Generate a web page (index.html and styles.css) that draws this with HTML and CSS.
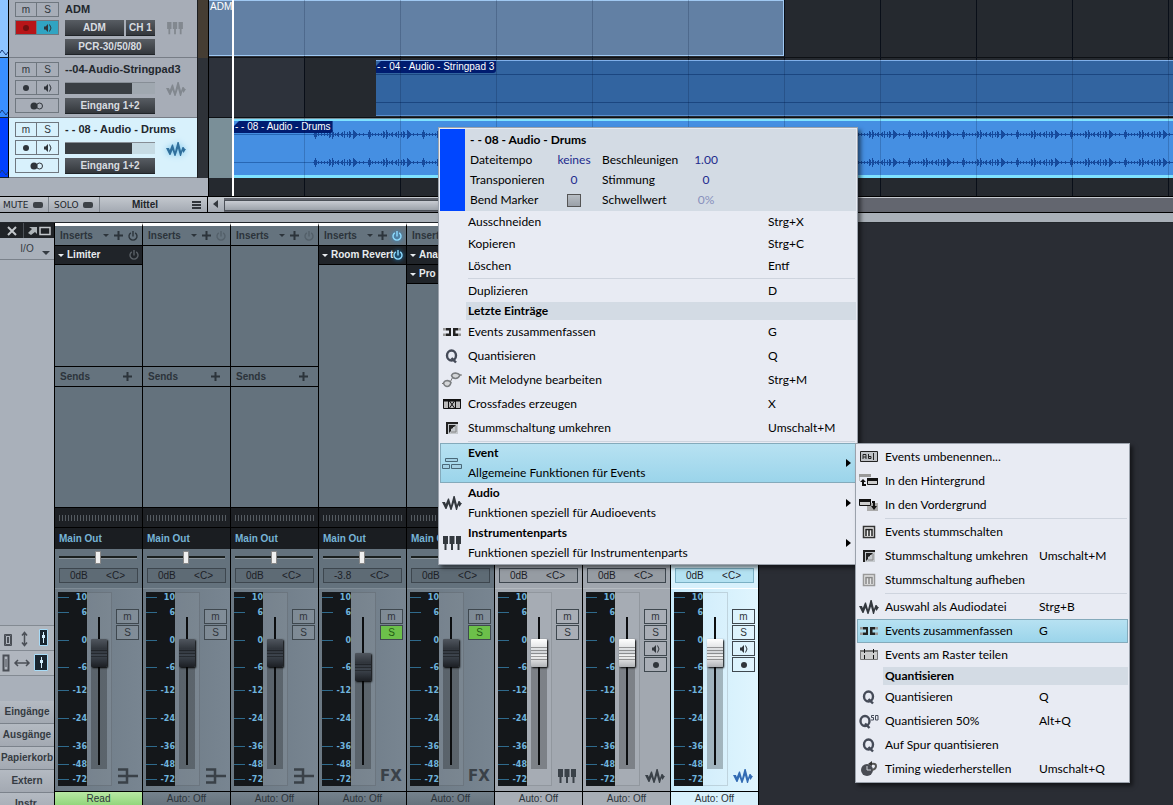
FILE: index.html
```html
<!DOCTYPE html>
<html lang="de">
<head>
    <meta charset="UTF-8">
    <meta name="viewport" content="width=device-width, initial-scale=1.0">
    <title>Song</title>
    <link rel="stylesheet" href="styles.css">
</head>
<body>
    <!-- icon set -->
    <svg class="defs" aria-hidden="true">
        <symbol id="i-rec" viewBox="0 0 12 12"><circle cx="6" cy="6" r="3" fill="currentColor"/></symbol>
        <symbol id="i-mon" viewBox="0 0 12 12"><path d="M2 4.500h1.500L6 2v8L3.500 7.500H2z" fill="currentColor"/><path d="M7.500 2.500q3 3.500 0 7" fill="none" stroke="currentColor"/></symbol>
        <symbol id="i-stereo" viewBox="0 0 14 10"><circle cx="4" cy="5" r="3.500" fill="currentColor"/><circle cx="9.500" cy="5" r="3" fill="none" stroke="currentColor"/></symbol>
        <symbol id="i-keys" viewBox="0 0 20 16"><path d="M1 1h5v8H4.500v6h-2V9H1zM7.500 1h5v8H11v6H9V9H7.500zM14 1h5v8h-1.500v6h-2V9H14z" fill="currentColor"/></symbol>
        <symbol id="i-wave" viewBox="0 0 20 16"><path d="M0 7h3l.8 2L6 3.500h1l2 7L11.500 1h1.200l2.300 9 1.500-4h1L19 8h1l-2.500 4-1-2-1.500 5h-1L12 7.500 9.500 15h-1L6.500 9 4.500 14h-1z" fill="currentColor"/></symbol>
        <symbol id="i-mini" viewBox="0 0 8 8"><path d="M0 4l2-3 4 5 2-3" fill="none" stroke="currentColor"/></symbol>
        <symbol id="i-bus" viewBox="0 0 22 16"><path d="M2 1.500h9v13H2M2 8h20" fill="none" stroke="currentColor" stroke-width="2.500"/></symbol>
        <symbol id="i-power" viewBox="0 0 10 10"><path d="M2.800 1.800a4 4 0 1 0 4.400 0M5 0v5.500" fill="none" stroke="currentColor" stroke-width="1.400"/></symbol>
        <symbol id="i-plus" viewBox="0 0 9 9"><path d="M3.500 0h2v3.500H9v2H5.500V9h-2V5.500H0v-2h3.500z" fill="currentColor"/></symbol>
        <symbol id="i-down" viewBox="0 0 8 4"><path d="M0 0h8L4 4z" fill="currentColor"/></symbol>
        <symbol id="i-right" viewBox="0 0 5 8"><path d="M0 0l5 4-5 4z" fill="currentColor"/></symbol>
        <symbol id="i-glue" viewBox="0 0 20 16"><path d="M4 4h5v8H4V9.500h3V6.500H4zM11 4h5v2.500h-2.500v3H16V12h-5z" fill="#222"/><path d="M1 4h3v2.500H1zM1 9.500h3V12H1zM16 4h3v2.500h-3zM16 9.500h3V12h-3z" fill="#999"/></symbol>
        <symbol id="i-q" viewBox="0 0 20 16"><ellipse cx="9.500" cy="7.500" rx="4.500" ry="5" fill="none" stroke="#454b58" stroke-width="2.400"/><path d="M9.500 10l4.500 4.500" stroke="#454b58" stroke-width="2.400"/></symbol>
        <symbol id="i-q50" viewBox="0 0 20 16"><ellipse cx="6" cy="8" rx="4.500" ry="5" fill="none" stroke="#454b58" stroke-width="2.400"/><path d="M6 10.500l4.500 4.500" stroke="#454b58" stroke-width="2.400"/><path d="M15 2.500h-2.500v2h2v2.500h-2.500M16.500 2.500h2.500v4.500h-2.500z" fill="none" stroke="#454b58"/></symbol>
        <symbol id="i-melodyne" viewBox="0 0 20 16"><path d="M9.500 3.500q1-2.500 4-2.500 3 .5 4.500 2-1.500 3.500-4.500 3.500t-4-3zM1.500 11q1-2.500 4-2.500 2.500.5 3.500 2-1 4-4 4-3-.5-3.500-3.500z" fill="#d4d6d8" stroke="#7a7d80" stroke-width="1.500"/><path d="M8.500 9.500l2-4M18 3h2M0 11.500h2" fill="none" stroke="#777"/></symbol>
        <symbol id="i-xfade" viewBox="0 0 20 16"><path d="M1.500 3.500h17v9h-17z" fill="#bbb" stroke="#111"/><path d="M1 3h18v2.500H1z" fill="#111"/><path d="M6.500 5v8M13.500 5v8M7.500 12l5-7M7.500 5l5 7" stroke="#111" fill="none"/></symbol>
        <symbol id="i-mute" viewBox="0 0 20 16"><path d="M4.500 2.500h11v11h-11z" fill="#eee" stroke="#333" stroke-width="1.500"/><path d="M7 12V5.500h6V12M10 5.500V12" fill="none" stroke="#222" stroke-width="1.500"/></symbol>
        <symbol id="i-unmute" viewBox="0 0 20 16"><path d="M4.500 2.500h11v11h-11z" fill="#e4e4e4" stroke="#999" stroke-width="1.500"/><path d="M7 12V5.500h6V12M10 5.500V12" fill="none" stroke="#888" stroke-width="1.500"/></symbol>
        <symbol id="i-mutetoggle" viewBox="0 0 20 16"><path d="M4 2h12v12H4z" fill="#c4c8cc"/><path d="M4 2h12v2H6v10H4z" fill="#222"/><path d="M7 5h7l-2 2h-1v1l-2 1v2l-2 2z" fill="#222"/><path d="M14 6v6H9" fill="none" stroke="#888"/></symbol>
        <symbol id="i-event" viewBox="0 0 20 16"><path d="M3.500 3.500h12v3h-12zM.5 9.500h7v4h-7zM9.500 9.500h10v4h-10z" fill="#a3d0e4" stroke="#4a6878"/></symbol>
        <symbol id="i-rename" viewBox="0 0 20 16"><path d="M1.500 2.500h17v10h-17z" fill="#bfc2c6" stroke="#222"/><path d="M4 10V5.500h3V10M4 8h3M9.500 5v4.500h2.500v-2H9.500M14.500 4v7" fill="none" stroke="#222"/></symbol>
        <symbol id="i-back" viewBox="0 0 20 16"><path d="M0 1h12v3H0z" fill="#999"/><path d="M.5 4v4" stroke="#bbb"/><path d="M8.500 5.500h10v6h-10z" fill="#ccc" stroke="#111"/><path d="M8 5h11v3H8z" fill="#111"/><path d="M4 6l3 3H5v2h2v2H3V9H1z" fill="#111"/></symbol>
        <symbol id="i-front" viewBox="0 0 20 16"><path d="M8 6h11v8H8z" fill="#aaa"/><path d="M.5 2.500h11v6H.5z" fill="#ccc" stroke="#111"/><path d="M0 2h12v3H0z" fill="#111"/><path d="M13 4h3v5h2l-3 4-3-4h2V6h-1z" fill="#111"/></symbol>
        <symbol id="i-split" viewBox="0 0 20 16"><path d="M1.500 3.500h17v9h-17z" fill="#ccc" stroke="#777"/><path d="M1 3h18v2H1z" fill="#777"/><path d="M5.500 2v12M14.500 2v12" stroke="#111" stroke-dasharray="4 2"/></symbol>
        <symbol id="i-timing" viewBox="0 0 20 16"><circle cx="8" cy="9" r="6" fill="#494c54"/><path d="M8 5v4h4" fill="none" stroke="#cdd0d6"/><path d="M12 3q5-1 5 2t-4 4" fill="none" stroke="#555" stroke-width="2"/><path d="M9 3l4-3v5z" fill="#333"/></symbol>
        <pattern id="hits" width="54" height="28" patternUnits="userSpaceOnUse">
            <path d="M0 13.500h54M1.500 11v5M2.500 9v9M3.500 11v5M5.500 12v3M8.500 12v3M11.500 12v3M14.500 12v3M16.500 10v7M17.500 11v5M19.500 9v9M20.500 11v5M22.500 12v3M24.500 12v3M25.500 11v5M28.500 12v3M29.500 11v5M31.500 10v7M34.500 11v5M36.500 10v7M37.500 11v5M40.500 9v9M41.500 10v7M42.500 11v5M43.500 12v3M46.500 12v3M50.500 12v3" stroke="#164a9c" fill="none"/>
        </pattern>
    </svg>

    <main class="app">
        <section class="arrange">
            <div class="tracks">
                <div class="track first">
                    <div class="color c1"><svg><use href="#i-mini"/></svg></div>
                    <div class="track-body">
                        <div class="toggles">
                            <button>m</button><button>S</button>
                            <button class="rec-on" aria-label="Aufnahme"><svg><use href="#i-rec"/></svg></button><button class="mon-on" aria-label="Monitor"><svg><use href="#i-mon"/></svg></button>
                        </div>
                        <div class="track-info">
                            <span class="track-name">ADM</span>
                            <div class="slots"><button class="slot grow">ADM</button><button class="slot">CH 1</button></div>
                            <button class="slot">PCR-30/50/80</button>
                        </div>
                        <svg class="type"><use href="#i-keys"/></svg>
                    </div>
                    <div class="edge warm"></div>
                </div>
                <div class="track">
                    <div class="color c2"><svg><use href="#i-mini"/></svg></div>
                    <div class="track-body">
                        <div class="toggles">
                            <button>m</button><button>S</button>
                            <button aria-label="Aufnahme"><svg><use href="#i-rec"/></svg></button><button aria-label="Monitor"><svg><use href="#i-mon"/></svg></button>
                            <button class="wide" aria-label="Stereo"><svg><use href="#i-stereo"/></svg></button>
                        </div>
                        <div class="track-info">
                            <span class="track-name">--04-Audio-Stringpad3</span>
                            <div class="level"></div>
                            <button class="slot">Eingang 1+2</button>
                        </div>
                        <svg class="type"><use href="#i-wave"/></svg>
                    </div>
                    <div class="edge"></div>
                </div>
                <div class="track selected">
                    <div class="color c3"><svg><use href="#i-mini"/></svg></div>
                    <div class="track-body">
                        <div class="toggles">
                            <button>m</button><button>S</button>
                            <button aria-label="Aufnahme"><svg><use href="#i-rec"/></svg></button><button aria-label="Monitor"><svg><use href="#i-mon"/></svg></button>
                            <button class="wide" aria-label="Stereo"><svg><use href="#i-stereo"/></svg></button>
                        </div>
                        <div class="track-info">
                            <span class="track-name">- - 08 - Audio - Drums</span>
                            <div class="level"></div>
                            <button class="slot">Eingang 1+2</button>
                        </div>
                        <svg class="type"><use href="#i-wave"/></svg>
                    </div>
                    <div class="edge"></div>
                </div>
            </div>
            <div class="timeline">
                <div class="lane first"><div class="event adm"><span>ADM</span></div></div>
                <div class="lane"><div class="event string"><span class="tag">- - 04 - Audio - Stringpad 3</span></div></div>
                <div class="lane active">
                    <div class="event drums"><span class="tag">- - 08 - Audio - Drums</span>
                        <svg class="hits"><rect width="100%" height="100%" fill="url(#hits)"/></svg>
                    </div>
                </div>
                <div class="playhead"></div>
            </div>
        </section>

        <div class="bar">
            <button class="led">MUTE<i></i></button>
            <button class="led">SOLO<i></i></button>
            <button class="size">Mittel<i></i></button>
            <button class="scroll-left" aria-label="Links"><svg><use href="#i-right"/></svg></button>
            <div class="scroll"><div class="thumb"></div></div>
        </div>
        <div class="band"></div>

        <section class="mixer">
            <div class="side">
                <div class="side-head">
                    <button aria-label="Schließen"><svg viewBox="0 0 10 10" width="10" height="10"><path d="M1 1l8 8M9 1l-8 8" stroke="#c4c8cc" stroke-width="2"/></svg></button>
                    <button aria-label="Fenster"><svg viewBox="0 0 24 10" width="24" height="10"><path d="M2 1h8v7L8 6 4 9 1 7l4-4z" fill="#aeb4b8"/><path d="M13 1.500h10v7H13z" fill="none" stroke="#c4c8cc" stroke-width="1.500"/></svg></button>
                </div>
                <button class="io">I/O<svg><use href="#i-down"/></svg></button>
                <div class="space"></div>
                <div class="zoom"><svg viewBox="0 0 54 24"><path d="M5.500 9.500h5v9h-5zM4.500 8.500h7v11h-7z" fill="none" stroke="#4a4f56"/><path d="M8 11v6" stroke="#4a4f56" stroke-width="2"/><path d="M24.500 8v10M22 9.500l2.500-3 2.500 3M22 16.500l2.500 3 2.500-3" fill="none" stroke="#4a4f56" stroke-width="1.500"/><path d="M39.500 3.500h8v16h-8z" fill="#1a2630" stroke="#a8dcf8"/><path d="M43.500 6v11M43.500 9v4" stroke="#d4f0ff"/><path d="M42 9h3v3h-3z" fill="#d4f0ff"/></svg></div>
                <div class="zoom"><svg viewBox="0 0 54 24"><path d="M3.500 4.500h5v15h-5z" fill="none" stroke="#4a4f56" stroke-width="2"/><path d="M6 8v8" stroke="#4a4f56"/><path d="M16 12h12M18 9l-3 3 3 3M26 9l3 3-3 3" fill="none" stroke="#4a4f56" stroke-width="1.500"/><path d="M34.500 3.500h13v16h-13z" fill="#1a2630" stroke="#a8dcf8"/><path d="M41.500 6v11" stroke="#d4f0ff"/><path d="M40 9h3v3h-3z" fill="#d4f0ff"/></svg></div>
                <div class="side-gap"></div>
                <button class="side-btn">Eingänge</button>
                <button class="side-btn">Ausgänge</button>
                <button class="side-btn">Papierkorb</button>
                <button class="side-btn">Extern</button>
                <button class="side-btn">Instr.</button>
            </div>
            <div class="strips" id="strips"></div>
        </section>
    </main>

    <div class="menu main-menu" role="menu">
        <div class="event-head">
            <div class="event-color"></div>
            <div class="event-props">
                <strong>- - 08 - Audio - Drums</strong>
                <span>Dateitempo</span><a href="#">keines</a><span>Beschleunigen</span><a href="#">1.00</a>
                <span>Transponieren</span><a href="#">0</a><span>Stimmung</span><a href="#">0</a>
                <label for="bend">Bend Marker</label><input type="checkbox" id="bend"><span>Schwellwert</span><a href="#" class="off">0%</a>
            </div>
        </div>
        <button class="item low"><i></i><span>Ausschneiden</span><kbd>Strg+X</kbd></button>
        <button class="item low"><i></i><span>Kopieren</span><kbd>Strg+C</kbd></button>
        <button class="item low"><i></i><span>Löschen</span><kbd>Entf</kbd></button>
        <hr>
        <button class="item low"><i></i><span>Duplizieren</span><kbd>D</kbd></button>
        <h2>Letzte Einträge</h2>
        <button class="item"><svg><use href="#i-glue"/></svg><span>Events zusammenfassen</span><kbd>G</kbd></button>
        <button class="item"><svg><use href="#i-q"/></svg><span>Quantisieren</span><kbd>Q</kbd></button>
        <button class="item"><svg><use href="#i-melodyne"/></svg><span>Mit Melodyne bearbeiten</span><kbd>Strg+M</kbd></button>
        <button class="item"><svg><use href="#i-xfade"/></svg><span>Crossfades erzeugen</span><kbd>X</kbd></button>
        <button class="item"><svg><use href="#i-mutetoggle"/></svg><span>Stummschaltung umkehren</span><kbd>Umschalt+M</kbd></button>
        <hr>
        <button class="item tall hot"><svg><use href="#i-event"/></svg><span><b>Event</b>Allgemeine Funktionen für Events</span><svg class="more"><use href="#i-right"/></svg></button>
        <button class="item tall"><svg><use href="#i-wave"/></svg><span><b>Audio</b>Funktionen speziell für Audioevents</span><svg class="more"><use href="#i-right"/></svg></button>
        <button class="item tall"><svg><use href="#i-keys"/></svg><span><b>Instrumentenparts</b>Funktionen speziell für Instrumentenparts</span><svg class="more"><use href="#i-right"/></svg></button>
    </div>

    <div class="menu sub-menu" role="menu">
        <button class="item"><svg><use href="#i-rename"/></svg><span>Events umbenennen...</span></button>
        <button class="item"><svg><use href="#i-back"/></svg><span>In den Hintergrund</span></button>
        <button class="item"><svg><use href="#i-front"/></svg><span>In den Vordergrund</span></button>
        <hr>
        <button class="item"><svg><use href="#i-mute"/></svg><span>Events stummschalten</span></button>
        <button class="item"><svg><use href="#i-mutetoggle"/></svg><span>Stummschaltung umkehren</span><kbd>Umschalt+M</kbd></button>
        <button class="item"><svg><use href="#i-unmute"/></svg><span>Stummschaltung aufheben</span></button>
        <hr>
        <button class="item"><svg><use href="#i-wave"/></svg><span>Auswahl als Audiodatei</span><kbd>Strg+B</kbd></button>
        <button class="item hot"><svg><use href="#i-glue"/></svg><span>Events zusammenfassen</span><kbd>G</kbd></button>
        <button class="item"><svg><use href="#i-split"/></svg><span>Events am Raster teilen</span></button>
        <h2>Quantisieren</h2>
        <button class="item"><svg><use href="#i-q"/></svg><span>Quantisieren</span><kbd>Q</kbd></button>
        <button class="item"><svg><use href="#i-q50"/></svg><span>Quantisieren 50%</span><kbd>Alt+Q</kbd></button>
        <button class="item"><svg><use href="#i-q"/></svg><span>Auf Spur quantisieren</span></button>
        <button class="item"><svg><use href="#i-timing"/></svg><span>Timing wiederherstellen</span><kbd>Umschalt+Q</kbd></button>
    </div>

    <script src="script.js"></script>
</body>
</html>
```
FILE: styles.css
```css
* { box-sizing: border-box; }
body { margin: 0; height: 100vh; overflow: hidden; position: relative; background: #2a2d34; color: #22262b; font: bold 10px/12px "Liberation Sans", Arial, sans-serif; }
button { margin: 0; padding: 0; border: 0; background: none; color: inherit; font: inherit; }
svg { display: block; flex: none; }
.defs { position: absolute; width: 0; height: 0; }
.app { display: flex; flex-direction: column; height: 100%; }

/* arrangement */
.arrange { display: flex; height: 196px; flex: none; background: #a9b0ba; }
.tracks { width: 209px; flex: none; border-right: 1px solid #000; }
.track { display: flex; height: 60px; }
.track.first { height: 58px; }
.color { width: 9px; border-right: 1px solid #000; border-bottom: 1px solid #123; display: flex; align-items: flex-end; color: #1b3c78; }
.color svg { width: 8px; height: 8px; }
.c1 { background: #8ec4ff; }
.c2 { background: #3a90ff; }
.c3 { background: #0040ff; }
.track-body { flex: 1; display: flex; gap: 6px; padding: 4px 0 0 6px; background: #a7adb7; border-bottom: 1px solid #777d86; color: #30353b; }
.first .track-body { padding-top: 2px; }
.selected .track-body { background: #d8f1fc; }
.toggles { display: grid; grid-template-columns: 22px 22px; grid-auto-rows: 15px; row-gap: 3px; align-content: start; }
.toggles button, .ms button { display: flex; align-items: center; justify-content: center; border: 1px solid #6f777f; font-size: 10px; font-weight: normal; color: #30353b; }
.toggles button:nth-child(even) { border-left: 0; }
.toggles svg, .ms svg { width: 12px; height: 12px; }
.toggles .wide { grid-column: span 2; }
.toggles .wide svg { width: 14px; height: 10px; }
.toggles .rec-on { background: #b81518; color: #701010; }
.toggles .mon-on { background: #31a4c2; }
.track-info { width: 90px; display: flex; flex-direction: column; gap: 3px; }
.track-name { height: 15px; line-height: 15px; font-size: 11px; white-space: nowrap; color: #22272d; }
.slots { display: flex; gap: 2px; }
.slot { height: 16px; width: 100%; flex: none; background: linear-gradient(#585d63, #33373c); border-bottom: 1px solid #1f2327; color: #d8dce0; line-height: 15px; }
.slots .slot { width: 29px; }
.slots .grow { flex: 1; }
.level { height: 12px; margin: 2px 0 1px; border-top: 1px solid #878e96; background: linear-gradient(90deg, #393e43 0 67px, #a0a8b0 67px); }
.selected .level { background: linear-gradient(90deg, #393e43 0 67px, #c6dbe4 67px); }
.type { width: 20px; height: 16px; margin: 19px 0 0 5px; color: #82888f; }
.selected .type { color: #2f6f9c; filter: drop-shadow(0 0 3px #6fc0ea); }
.first .type { width: 18px; height: 14px; }
.edge { width: 11px; background: #2e3238; border-left: 1px solid #1b1d20; }
.warm { background: #453d33; }

.timeline { flex: 1; position: relative; min-width: 0; overflow: hidden; background: #25292f; }
.timeline::after { content: ""; position: absolute; inset: 0; background: repeating-linear-gradient(90deg, transparent 0 95px, rgba(0, 16, 48, .2) 95px 96px); }
.lane { height: 60px; padding: 2px 0; border-bottom: 1px solid #0d1014; background: linear-gradient(90deg, #2d323b 0 95px, transparent 95px); }
.lane:not(.active), .timeline { background-image: repeating-linear-gradient(90deg, transparent 0 95px, #0b0e12 95px 96px); }
.lane:not(.active) { background-image: linear-gradient(90deg, #2d323b 0 95px, transparent 95px); }
.lane.first { height: 58px; padding: 0; }
.lane.active { padding: 1px 0 0; border: 0; background: #7a8f98; }
.event { position: relative; height: 56px; }
.adm { width: 575px; background: #6280a4; border: solid #9fc8f2; border-width: 1px 1px 1px 0; color: #fff; font: 10px/12px "Liberation Sans", Arial, sans-serif; padding-left: 1px; }
.string { margin-left: 167px; border-top: 1px solid #80b0ea; border-bottom: 1px solid #5c90d0; background: linear-gradient(transparent 13px, #1b4680 13px 14px, transparent 14px 41px, #1b4680 41px 42px, transparent 42px) #3264a0; }
.tag { position: absolute; left: 0; top: 0; padding: 0 2px 0 1px; background: #001c70; border-bottom-right-radius: 3px; color: #fff; font: 10px/12px "Liberation Sans", Arial, sans-serif; white-space: nowrap; clip-path: polygon(5px 0, 100% 0, 100% 100%, 0 100%, 0 5px); }
.drums { height: 59px; margin-left: 25px; border-top: 2px solid #7fe2ff; border-bottom: 3px solid #7fe2ff; background: linear-gradient(transparent 13px, #2767b5 13px 14px, transparent 14px 41px, #2767b5 41px 42px, transparent 42px) #458fe2; padding-left: 79px; }
.hits { width: 100%; height: 54px; }
.playhead { position: absolute; left: 23px; top: 0; width: 2px; height: 100%; background: #fff; z-index: 1; }

/* status bar and scrollbar */
.bar { display: flex; height: 17px; flex: none; border-top: 1px solid #000; border-bottom: 1px solid #000; background: linear-gradient(#c3c8ce, #a3a9b2); }
.led { display: flex; align-items: center; gap: 4px; width: 49px; padding-left: 3px; border-right: 1px solid #7d848c; font: 9px/12px "DejaVu Sans", sans-serif; }
.led + .led { width: 51px; padding-left: 5px; }
.led i { width: 10px; height: 6px; border-radius: 2px; background: #3d4247; }
.size { flex: none; width: 108px; display: flex; align-items: center; justify-content: flex-end; gap: 34px; padding-right: 6px; border-right: 1px solid #000; }
.size i { width: 9px; height: 8px; background: repeating-linear-gradient(#30353b 0 2px, transparent 2px 3px); }
.scroll-left { width: 16px; display: flex; align-items: center; justify-content: center; color: #33383e; transform: rotate(180deg); }
.scroll-left svg { width: 5px; height: 8px; }
.scroll { flex: 1; padding: 2px 0; border-top: 1px solid #c6cad0; background: #63666f; }
.thumb { width: 45%; height: 11px; border: 1px solid #4c5158; background: linear-gradient(#c8ccd2, #9ca2aa); }
.band { height: 10px; flex: none; background: #a9b0b8; border-bottom: 1px solid #23272c; }

/* mixer */
.mixer { flex: 1; min-height: 0; display: flex; overflow: hidden; }
.side { width: 55px; flex: none; display: flex; flex-direction: column; margin-bottom: -11px; background: #a9b0ba; border-right: 1px solid #000; color: #353b42; }
.side-head { display: flex; height: 15px; gap: 1px; background: #4c5157; }
.side-head button { flex: 1; display: flex; align-items: center; justify-content: center; background: #202327; }
.side-head button + button { flex: none; width: 30px; }
.io { position: relative; height: 22px; border-bottom: 1px solid #7b828b; font-weight: normal; }
.io svg { position: absolute; right: 4px; bottom: 4px; width: 8px; height: 4px; }
.space { flex: 1; }
.zoom { height: 25px; border-top: 1px solid #838a92; background: #b0b6be; }
.zoom svg { width: 54px; height: 24px; }
.side-gap { height: 26px; border-top: 1px solid #838a92; }
.side-btn { height: 23px; flex: none; border-bottom: 1px solid #7b828b; background: linear-gradient(#b4bac2, #a3a9b2); }

.strips { display: flex; }
.strip { width: 88px; flex: none; display: flex; flex-direction: column; border-top: 3px solid #fff; border-right: 1px solid #000; background: #64727d; color: #2c343b; }
.strip-head { display: flex; align-items: center; height: 20px; flex: none; gap: 5px; padding: 0 4px 0 5px; border-bottom: 1px solid #000; background: #65737e; }
.strip-head span { flex: 1; }
.strip-head .down { width: 6px; height: 3px; }
.strip-head .plus { width: 9px; height: 9px; }
.power { width: 10px; height: 10px; }
.power.dim { opacity: .3; }
.power.lit { color: #8fdcff; filter: drop-shadow(0 0 2px #1f9cf0); }
.inserts { height: 121px; flex: none; border-bottom: 1px solid #000; }
.inserts.fill { height: auto; flex: 1; }
.insert { display: flex; align-items: center; width: 100%; height: 19px; gap: 3px; padding: 0 3px; background: #202429; border-bottom: 1px solid #000; color: #e8ecef; text-align: left; }
.insert span { flex: 1; min-width: 0; white-space: nowrap; }
.insert .down { width: 6px; height: 3px; }
.insert .power:not(.lit) { color: #5a6066; }
.sends-head { padding-right: 10px; }
.sends { flex: 1; border-bottom: 1px solid #000; }
.meter { height: 20px; flex: none; padding: 7px 4px; background: #1d2024; border-bottom: 1px solid #000; }
.meter div { height: 6px; background: repeating-linear-gradient(90deg, #555b61 0 1px, transparent 1px 3px); }
.out { height: 21px; flex: none; padding-left: 4px; background: #1a1d21; color: #76b4d6; text-align: left; line-height: 19px; }
.pan { height: 17px; flex: none; padding: 2px 4px; }
.pan input { display: block; width: 78px; height: 13px; margin: 0; appearance: none; background: linear-gradient(transparent 5px, #1b201f 5px 7px, #8b959c 7px 8px, transparent 8px); }
.pan input::-webkit-slider-thumb { appearance: none; width: 6px; height: 13px; border: 1px solid #888; border-radius: 1px; background: #f0f0f0; }
.value { display: flex; justify-content: space-between; flex: none; height: 15px; margin: 2px 4px 5px; padding: 0 12px 0 10px; border: 1px solid #3d464e; background: rgba(0, 0, 0, .06); color: #1c2026; font-weight: normal; line-height: 13px; }
.desk { display: flex; height: 204px; flex: none; gap: 4px; padding: 3px 3px 5px; border-top: 1px solid #7f8c96; border-bottom: 1px solid #000; background: linear-gradient(90deg, #6b7883, #788591); }
.scale { width: 29px; flex: none; display: grid; grid-template-rows: 15px 28px 27px 23px 28px 28px 18px 15px 12px; margin: 0; padding: 0; list-style: none; background: #14171a; color: #6fb3dc; font: bold 8px/11px "DejaVu Sans", sans-serif; text-align: right; }
.scale li { height: 11px; background: linear-gradient(#2f6a8c, #2f6a8c) 0 5px / 11px 1px no-repeat; }
.fader { width: 25px; flex: none; margin-left: -4px; padding: 24px 0 0 4px; border: 1px solid rgba(0, 0, 0, .12); border-left: 0; background: rgba(255, 255, 255, .05); }
.fader input { display: block; width: 16px; height: 152px; margin: 0; appearance: none; writing-mode: vertical-lr; direction: rtl; background: linear-gradient(#0c0e10, #0c0e10) 7px 0 / 2px 148px no-repeat, linear-gradient(rgba(0, 0, 0, .25), rgba(0, 0, 0, .25)) 0 40px / 16px 112px no-repeat; }
.fader input::-webkit-slider-thumb { appearance: none; width: 16px; height: 28px; border-radius: 1px; box-shadow: 1px 1px 2px #000; background: repeating-linear-gradient(transparent 0 2px, rgba(0, 0, 0, .35) 2px 3px) 0 9px / 16px 10px no-repeat, linear-gradient(#50565e, #30353c 35%, #3d444d 60%, #1c1f24); }
.ms { flex: 1; display: flex; flex-direction: column; gap: 1px; padding-top: 17px; }
.ms button { width: 23px; height: 15px; flex: none; border-color: #3f484f; background: rgba(255, 255, 255, .08); }
.ms .solo { background: #6cc04a; color: #235a14; }
.kind { width: 22px; height: 16px; margin-top: auto; margin-bottom: 2px; color: #3a4148; }
.ms .kind { width: 22px; height: 16px; }
.kind.fx { font: bold 15px/16px "DejaVu Sans", sans-serif; }
.auto { flex: none; height: 13px; background: linear-gradient(#75828d, #66737d); font-weight: normal; line-height: 13px; }
.auto.read { background: linear-gradient(#b8e8a4, #92d67c); }

.light { background: #a0a6ae; }
.light .desk { background: #a2a8b0; border-top-color: #b4bac0; }
.light .auto { background: #a8aeb6; }
.active-strip, .active-strip .auto { background: #d8f1fc; }
.active-strip .desk { background: linear-gradient(90deg, #c8eafa, #e0f5fe); border-top-color: #fff; border-bottom-color: #000; }
.active-strip .value { background: #b4e2f2; border-color: #7ab0c4; }
.active-strip .kind { color: #336cb4; }
.light .fader input::-webkit-slider-thumb, .active-strip .fader input::-webkit-slider-thumb { background: repeating-linear-gradient(transparent 0 2px, rgba(0, 0, 0, .35) 2px 3px) 0 6px / 16px 15px no-repeat, linear-gradient(#fff, #d0d3d6 50%, #f4f4f4 60%, #b0b3b6); }

/* context menus */
.menu { position: absolute; border: 1px solid #9ba2ac; padding: 1px; background: #e8ebf3; color: #000; font: 12px/20px Lato, "Noto Sans", sans-serif; box-shadow: 3px 3px 4px rgba(0, 0, 0, .5); z-index: 2; }
.main-menu { left: 438px; top: 127px; width: 420px; }
.sub-menu { left: 855px; top: 443px; width: 275px; }
.event-head { display: flex; height: 82px; background: #d3dbe4; }
.event-color { width: 25px; background: #0046ff; }
.event-props { display: grid; grid-template-columns: 76px 48px 78px 44px; grid-auto-rows: 20px; column-gap: 4px; padding: 1px 5px; }
.event-props strong { grid-column: 1 / -1; }
.event-props a { color: #1c2a8c; text-decoration: none; text-align: center; }
.event-props .off { color: #8890bc; }
.event-props input { appearance: none; width: 14px; height: 13px; margin: 4px auto; border: 1px solid #555; background: linear-gradient(#b8bec4, #9aa0a8); }
.menu .item { display: grid; grid-template-columns: 28px 300px 1fr; align-items: center; width: 100%; height: 24px; text-align: left; white-space: nowrap; }
.sub-menu .item { grid-template-columns: 28px 154px 1fr; }
.item svg { width: 20px; height: 16px; color: #33383e; margin-left: 2px; }
.menu .low { height: 22px; }
.menu kbd { font: inherit; }
.menu .tall { height: 40px; grid-template-columns: 28px 1fr 12px; }
.tall b { display: block; }
.menu .more { width: 5px; height: 8px; color: #000; }
.menu .hot { background: linear-gradient(#b8e2f2, #9ad4ea); outline: 1px solid #84aabb; outline-offset: -1px; }
.menu hr { height: 1px; margin: 1px 1px 1px 28px; border: 0; background: #ced4de; }
.menu h2 { margin: 0 0 0 26px; padding-left: 2px; height: 18px; background: #d3dbe4; font-size: 12px; line-height: 18px; }
```
FILE: script.js
```js
const channels = [
    { inserts: [['Limiter', '']], power: '', kind: 'bus', auto: 'Read' },
    { inserts: [], power: 'dim', kind: 'bus' },
    { inserts: [], power: 'dim', kind: 'bus' },
    { inserts: [['Room Revert', 'lit']], power: 'lit', kind: 'fx', db: '-3.8', pos: 71, solo: true },
    { inserts: [['Anal', 'lit'], ['Pro', 'lit']], power: 'lit', kind: 'fx', solo: true },
    { kind: 'keys', look: 'light' },
    { kind: 'wave', look: 'light', rec: true },
    { kind: 'wave', look: 'active-strip', rec: true }
];
const marks = [10, 6, 0, -6, -12, -24, -36, -48, -72];

const icon = (name, cls = '') => `<svg class="${cls}"><use href="#i-${name}"/></svg>`;

// insert rack, sends and routing of one channel
function rack(c) {
    if (!c.inserts) return '<div class="inserts fill"></div><div class="meter"></div><div class="out"></div>';
    const fx = c.kind === 'fx';
    const inserts = c.inserts.map(([name, state]) =>
        `<button class="insert">${icon('down', 'down')}<span>${name}</span>${icon('power', 'power ' + state)}</button>`).join('');
    const sends = fx ? '' : `<div class="strip-head sends-head"><span>Sends</span>${icon('plus', 'plus')}</div><div class="sends"></div>`;
    return `<div class="strip-head"><span>Inserts</span>${icon('down', 'down')}${icon('plus', 'plus')}${icon('power', 'power ' + c.power)}</div>
        <div class="inserts ${fx ? 'fill' : ''}">${inserts}</div>
        ${sends}
        <div class="meter"><div></div></div>
        <button class="out">Main Out</button>`;
}

function strip(c) {
    const rec = c.rec ? `<button aria-label="Monitor">${icon('mon')}</button><button aria-label="Aufnahme">${icon('rec')}</button>` : '';
    return `<div class="strip ${c.look || ''}">
        ${rack(c)}
        <div class="pan"><input type="range" value="50" aria-label="Panorama"></div>
        <div class="value"><span>${c.db || '0dB'}</span><span>&lt;C&gt;</span></div>
        <div class="desk">
            <ul class="scale">${marks.map(m => `<li>${m}</li>`).join('')}</ul>
            <div class="fader"><input type="range" value="${c.pos || 82}" aria-label="Pegel"></div>
            <div class="ms"><button>m</button><button class="${c.solo ? 'solo' : ''}">S</button>${rec}
                ${c.kind === 'fx' ? '<span class="kind fx">FX</span>' : icon(c.kind, 'kind')}</div>
        </div>
        <button class="auto ${c.auto ? 'read' : ''}">${c.auto || 'Auto: Off'}</button>
    </div>`;
}

document.getElementById('strips').innerHTML = channels.map(strip).join('');
```
